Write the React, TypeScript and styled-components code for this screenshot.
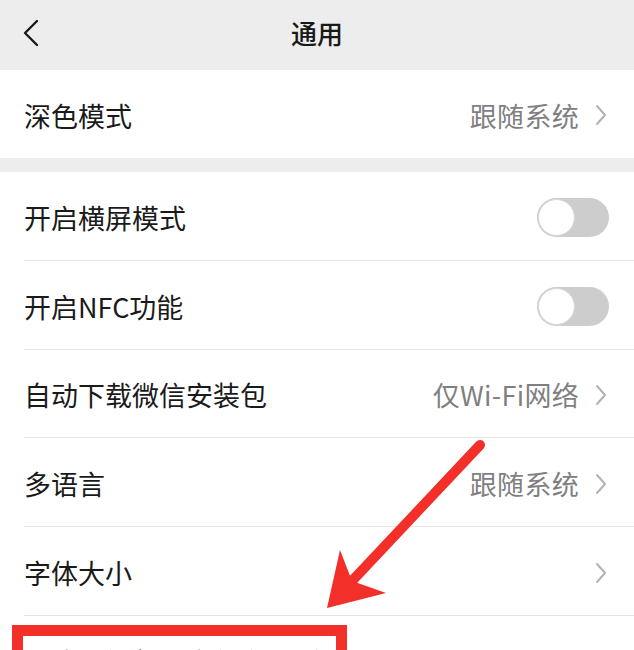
import React from 'react';
import styled, { createGlobalStyle } from 'styled-components';

const GlobalStyle = createGlobalStyle`
  html, body {
    margin: 0;
    padding: 0;
    background: #ededed;
    overflow: hidden;
  }
  body {
    font-family: "Noto Sans CJK SC", "Noto Sans", sans-serif;
    color: #191919;
  }
`;

type Item =
  | { label: string; kind: 'switch' }
  | { label: string; kind: 'link'; value?: string };

const groups: Item[][] = [
  [{ label: '深色模式', kind: 'link', value: '跟随系统' }],
  [
    { label: '开启横屏模式', kind: 'switch' },
    { label: '开启NFC功能', kind: 'switch' },
    { label: '自动下载微信安装包', kind: 'link', value: '仅Wi-Fi网络' },
    { label: '多语言', kind: 'link', value: '跟随系统' },
    { label: '字体大小', kind: 'link' },
    { label: '照片、视频、文件和通话', kind: 'link' },
  ],
];

const App = () => (
  <Screen>
    <GlobalStyle />
    <Header>
      <BackButton aria-label="返回">
        <svg width="18" height="28" viewBox="0 0 18 28">
          <path d="M15 2 L3 14 L15 26" fill="none" stroke="#191919" strokeWidth="2.4" strokeLinecap="round" strokeLinejoin="round" />
        </svg>
      </BackButton>
      <Title>通用</Title>
    </Header>

    {groups.map((group, gi) => (
      <Group key={gi} first={gi === 0}>
        {group.map((item, i) => (
          <Row key={item.label} tall={gi > 0} last={i === group.length - 1}>
            <Label>{item.label}</Label>
            {item.kind === 'switch' ? (
              <Switch>
                <Knob />
              </Switch>
            ) : (
              <Trail>
                {item.value && <Value>{item.value}</Value>}
                <Chevron width="12" height="22" viewBox="0 0 12 22">
                  <path d="M2 2 L10 11 L2 20" fill="none" stroke="#b2b2b2" strokeWidth="2" strokeLinecap="round" strokeLinejoin="round" />
                </Chevron>
              </Trail>
            )}
          </Row>
        ))}
      </Group>
    ))}

    <Arrow width="634" height="650" viewBox="0 0 634 650">
      <line x1="480" y1="445" x2="352" y2="581" stroke="#f22f28" strokeWidth="10" strokeLinecap="round" />
      <polygon points="327,608 340,550 352,581 386,593" fill="#f22f28" />
    </Arrow>
    <Highlight />
  </Screen>
);

const Screen = styled('div')`
  position: relative;
  width: 634px;
  height: 650px;
  overflow: hidden;
  background: #ededed;
`;

const Header = styled('header')`
  position: relative;
  height: 70px;
  display: flex;
  align-items: center;
  justify-content: center;
`;

const BackButton = styled('button')`
  position: absolute;
  left: 22px;
  top: 19px;
  padding: 0;
  border: 0;
  background: none;
  display: flex;
`;

const Title = styled('h1')`
  margin: 0 0 4px;
  font-size: 26px;
  font-weight: 500;
  line-height: 1;
  color: #191919;
`;

const Group = styled('section')<{ first: boolean }>`
  background: #fff;
  margin-top: ${(p) => (p.first ? 0 : 14)}px;
`;

const Row = styled('div')<{ tall: boolean; last: boolean }>`
  position: relative;
  height: ${(p) => (p.tall ? 88.8 : 88)}px;
  box-sizing: border-box;
  padding: 2px 25px 0 24px;
  display: flex;
  align-items: center;
  justify-content: space-between;

  &::after {
    content: '';
    display: ${(p) => (p.last ? 'none' : 'block')};
    position: absolute;
    left: 24px;
    right: 0;
    bottom: 0;
    height: 1px;
    background: #e6e6e6;
  }
`;

const Label = styled('span')`
  font-size: 27px;
  color: #1a1a1a;
  line-height: 1;
  white-space: nowrap;
`;

const Trail = styled('div')`
  display: flex;
  align-items: center;
  gap: 16px;
`;

const Value = styled('span')`
  font-size: 27px;
  color: #7f7f7f;
  line-height: 1;
  letter-spacing: 0.3px;
`;

const Chevron = styled('svg')`
  display: block;
  margin-right: 2px;
`;

const Switch = styled('div')`
  position: relative;
  width: 72px;
  height: 39px;
  border-radius: 20px;
  background: #cdcdcd;
`;

const Knob = styled('div')`
  position: absolute;
  left: 1px;
  top: 1px;
  width: 35px;
  height: 35px;
  border-radius: 50%;
  background: #fff;
  border: 1px solid #d6d6d6;
`;

const Arrow = styled('svg')`
  position: absolute;
  left: 0;
  top: 0;
  pointer-events: none;
`;

const Highlight = styled('div')`
  position: absolute;
  left: 12px;
  top: 625px;
  width: 335px;
  height: 60px;
  box-sizing: border-box;
  border: 11px solid #f22f28;
  border-bottom: 0;
  pointer-events: none;
`;

export default App;
